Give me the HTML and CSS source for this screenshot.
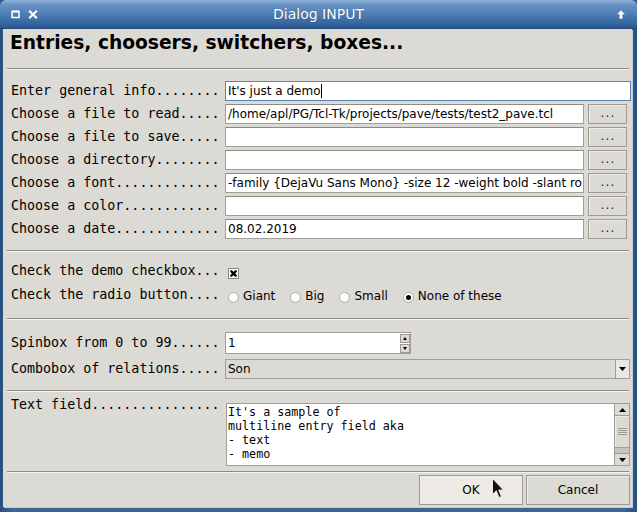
FILE: index.html
```html
<!DOCTYPE html>
<html>
<head>
<meta charset="utf-8">
<title>Dialog INPUT</title>
<link rel="stylesheet" href="styles.css">
</head>
<body>
<div class="window">
  <div class="titlebar">
    <div class="tb-left">
      <svg class="tb-icon" width="9" height="9" viewBox="0 0 9 9"><rect x="1" y="1.5" width="7" height="6" fill="none" stroke="#fff" stroke-width="1.5"/><line x1="1" y1="1.6" x2="8" y2="1.6" stroke="#fff" stroke-width="2"/></svg>
      <svg class="tb-icon" width="10" height="9" viewBox="0 0 10 9"><path d="M1.2 0.8 L8.8 8.2 M8.8 0.8 L1.2 8.2" stroke="#fff" stroke-width="2.1" fill="none"/></svg>
    </div>
    <div class="title">Dialog INPUT</div>
    <div class="tb-right">
      <svg width="8" height="9" viewBox="0 0 8 9"><path d="M4 0.3 L7.8 4.2 L5.4 4.2 L5.4 8.8 L2.6 8.8 L2.6 4.2 L0.2 4.2 Z" fill="#fff"/></svg>
    </div>
  </div>

  <div class="content">
    <h1 class="heading">Entries, choosers, switchers, boxes...</h1>
    <div class="sep"></div>

    <section class="sec sec-entries">
      <div class="row">
        <span class="lbl">Enter general info........</span>
        <div class="entry entry-wide focus">It's just a demo<span class="caret"></span></div>
      </div>
      <div class="row">
        <span class="lbl">Choose a file to read.....</span>
        <div class="entry">/home/apl/PG/Tcl-Tk/projects/pave/tests/test2_pave.tcl</div>
        <div class="dots">...</div>
      </div>
      <div class="row">
        <span class="lbl">Choose a file to save.....</span>
        <div class="entry"></div>
        <div class="dots">...</div>
      </div>
      <div class="row">
        <span class="lbl">Choose a directory........</span>
        <div class="entry"></div>
        <div class="dots">...</div>
      </div>
      <div class="row">
        <span class="lbl">Choose a font.............</span>
        <div class="entry">-family {DejaVu Sans Mono} -size 12 -weight bold -slant ro</div>
        <div class="dots">...</div>
      </div>
      <div class="row">
        <span class="lbl">Choose a color............</span>
        <div class="entry"></div>
        <div class="dots">...</div>
      </div>
      <div class="row">
        <span class="lbl">Choose a date.............</span>
        <div class="entry">08.02.2019</div>
        <div class="dots">...</div>
      </div>
    </section>
    <div class="sep"></div>

    <section class="sec sec-checks">
      <div class="row">
        <span class="lbl">Check the demo checkbox...</span>
        <svg class="check" width="11" height="11" viewBox="0 0 11 11"><rect x="0.5" y="0.5" width="10" height="10" fill="#fff" stroke="#8a877f"/><path d="M2.6 2.6 L8.4 8.4 M8.4 2.6 L2.6 8.4" stroke="#000" stroke-width="2.2"/></svg>
      </div>
      <div class="row">
        <span class="lbl">Check the radio button....</span>
        <div class="radios">
          <div class="radio"><span class="dot"></span>Giant</div>
          <div class="radio"><span class="dot"></span>Big</div>
          <div class="radio"><span class="dot"></span>Small</div>
          <div class="radio"><span class="dot on"></span>None of these</div>
        </div>
      </div>
    </section>
    <div class="sep"></div>

    <section class="sec sec-boxes">
      <div class="row row-spin">
        <span class="lbl">Spinbox from 0 to 99......</span>
        <div class="spin">
          <span class="spin-val">1</span>
          <div class="spin-btns">
            <span class="spin-btn"><svg width="4" height="3" viewBox="0 0 4 3"><path d="M2 0 L4 3 L0 3 Z" fill="#000"/></svg></span>
            <span class="spin-btn"><svg width="4" height="3" viewBox="0 0 4 3"><path d="M0 0 L4 0 L2 3 Z" fill="#000"/></svg></span>
          </div>
        </div>
      </div>
      <div class="row">
        <span class="lbl">Combobox of relations.....</span>
        <div class="combo">
          <span class="combo-val">Son</span>
          <span class="combo-btn"><svg width="7" height="4" viewBox="0 0 7 4"><path d="M0 0 L7 0 L3.5 4 Z" fill="#000"/></svg></span>
        </div>
      </div>
    </section>
    <div class="sep"></div>

    <section class="sec sec-text">
      <span class="lbl lbl-top">Text field................</span>
      <div class="textwrap">
        <div class="textbox">It's a sample of
multiline entry field aka
- text
- memo</div>
        <div class="vscroll">
          <span class="sb-btn"><svg width="7" height="4" viewBox="0 0 7 4"><path d="M3.5 0 L7 4 L0 4 Z" fill="#000"/></svg></span>
          <div class="sb-trough">
            <div class="sb-thumb"><span></span><span></span><span></span><span></span></div>
          </div>
          <span class="sb-btn"><svg width="7" height="4" viewBox="0 0 7 4"><path d="M0 0 L7 0 L3.5 4 Z" fill="#000"/></svg></span>
        </div>
      </div>
    </section>
    <div class="sep"></div>

    <section class="sec sec-buttons">
      <button class="btn hover">OK</button>
      <button class="btn">Cancel</button>
    </section>
  </div>

  <svg class="cursor" width="12" height="21" viewBox="0 0 12 21"><path d="M0.5 0.5 L0.5 16.5 L4.3 12.8 L7 19.5 L9.4 18.5 L6.8 12 L11.5 12 Z" fill="#111" stroke="#e8e8e8" stroke-width="1"/></svg>
</div>
</body>
</html>
```

FILE: styles.css
```css
* {
  box-sizing: border-box;
  margin: 0;
  padding: 0;
}

html, body {
  width: 637px;
  height: 512px;
  overflow: hidden;
}

body {
  background: #2e5a8e;
  font-family: "DejaVu Sans", sans-serif;
  color: #000;
}

.window {
  position: relative;
  width: 637px;
  height: 512px;
  display: flex;
  flex-direction: column;
  background: linear-gradient(to right, #27507f, #3a6699 2%, #3a6699 98%, #27507f);
  border-radius: 6px 6px 0 0;
  overflow: hidden;
}

/* ---------- title bar ---------- */
.titlebar {
  height: 29px;
  flex: none;
  display: grid;
  grid-template-columns: 1fr auto 1fr;
  align-items: center;
  background: linear-gradient(to bottom, #8eb1d6 0%, #6792c2 18%, #4b7bb1 55%, #3465a0 85%, #2b578c 100%);
  border-bottom: 1px solid #23497a;
  color: #fff;
}

.tb-left {
  display: flex;
  align-items: center;
  gap: 8px;
  padding-left: 11px;
}

.tb-icon {
  display: block;
}

.title {
  font-family: "DejaVu Sans", sans-serif;
  font-size: 14px;
  line-height: 16px;
  color: #fff;
  text-shadow: 0 0 1px rgba(20, 50, 90, 0.6);
}

.tb-right {
  justify-self: end;
  padding-right: 12px;
  display: flex;
  align-items: center;
}

/* ---------- content ---------- */
.content {
  margin: 0 5px 5px 3px;
  height: 478px;
  flex: none;
  background: #dcdad5;
  display: flex;
  flex-direction: column;
  box-shadow: 1px 1px 0 #c3ccd8;
}

.heading {
  height: 39px;
  flex: none;
  padding: 3px 0 0 7px;
  font-family: "DejaVu Sans", sans-serif;
  font-weight: bold;
  font-size: 18.67px;
  line-height: 22px;
  white-space: nowrap;
}

.sep {
  height: 2px;
  flex: none;
  margin: 0 3px 0 4px;
  border-top: 1px solid #8e8b85;
  border-bottom: 1px solid #f6f5f3;
}

.sec {
  flex: none;
  display: flex;
  flex-direction: column;
  padding-left: 8px;
}

.row {
  display: flex;
  align-items: center;
  height: 20px;
}

.lbl {
  width: 214px;
  flex: none;
  font-family: "DejaVu Sans Mono", monospace;
  font-size: 13.33px;
  line-height: 18px;
  white-space: pre;
}

/* entries */
.sec-entries {
  padding-top: 11px;
  padding-bottom: 11px;
  gap: 3px;
}

.entry {
  width: 359px;
  flex: none;
  height: 20px;
  background: #fff;
  border: 1px solid #a19e97;
  border-top-color: #8d8a84;
  padding: 0 2px;
  font-size: 12px;
  line-height: 18px;
  white-space: nowrap;
  overflow: hidden;
  display: flex;
  align-items: center;
}

.entry-wide {
  width: auto;
  flex: 1;
  margin-right: 1px;
}

.entry.focus {
  border-color: #5a82b3;
}

.caret {
  display: inline-block;
  width: 1px;
  height: 14px;
  background: #000;
}

.dots {
  width: 39px;
  height: 20px;
  flex: none;
  margin-left: 4px;
  background: #dcdad5;
  border: 1px solid #9e9a91;
  box-shadow: inset 1px 1px 0 #eeece8;
  font-size: 12px;
  line-height: 17px;
  letter-spacing: 1.2px;
  text-indent: 1.2px;
  text-align: center;
  color: #1a1a1a;
}

/* checks */
.sec-checks {
  padding-top: 9px;
  padding-bottom: 13px;
  gap: 4px;
}

.check {
  display: block;
  margin-left: 3px;
  margin-top: 4px;
}

.radios {
  display: flex;
  gap: 15px;
  margin-left: 3px;
  margin-top: 2px;
}

.radio {
  display: flex;
  align-items: center;
  font-size: 12px;
  line-height: 16px;
  white-space: nowrap;
}

.radio .dot {
  width: 11px;
  height: 11px;
  margin-right: 4px;
  margin-top: 3px;
  border-radius: 50%;
  border: 1px solid #b3b0a9;
  background: radial-gradient(circle at 40% 35%, #ffffff 40%, #e9e7e3 100%);
  display: flex;
  align-items: center;
  justify-content: center;
}

.radio .dot.on::after {
  content: "";
  width: 5px;
  height: 5px;
  border-radius: 50%;
  background: #000;
}

/* spin / combo */
.sec-boxes {
  padding-top: 12px;
  padding-bottom: 11px;
  gap: 5px;
}

.row-spin {
  height: 22px;
}

.spin {
  width: 186px;
  height: 22px;
  background: #fff;
  border: 1px solid #a19e97;
  display: flex;
  align-items: center;
  padding-left: 2px;
}

.spin-val {
  flex: 1;
  font-size: 12px;
  line-height: 18px;
}

.spin-btns {
  display: flex;
  flex-direction: column;
  gap: 1px;
}

.spin-btn {
  width: 10px;
  height: 9px;
  background: #dcdad5;
  border: 1px solid #9e9a91;
  display: flex;
  align-items: center;
  justify-content: center;
}

.combo {
  flex: 1;
  margin-right: 2px;
  height: 20px;
  background: #dcdad5;
  border: 1px solid #a19e97;
  display: flex;
  align-items: center;
}

.combo-val {
  flex: 1;
  padding-left: 2px;
  font-size: 12px;
  line-height: 18px;
}

.combo-btn {
  width: 14px;
  height: 18px;
  background: #e9e7e3;
  border-left: 1px solid #a19e97;
  display: flex;
  align-items: center;
  justify-content: center;
}

/* text */
.sec-text {
  flex-direction: row;
  align-items: flex-start;
  padding-top: 11px;
  padding-bottom: 5px;
}

.lbl-top {
  margin-top: -7px;
}

.textwrap {
  flex: 1;
  margin-left: 1px;
  margin-right: 2px;
  height: 63px;
  display: flex;
}

.textbox {
  flex: 1;
  height: 63px;
  background: #fff;
  border: 1px solid #a19e97;
  padding: 1px 1px 0;
  font-family: "DejaVu Sans Mono", monospace;
  font-size: 11.7px;
  line-height: 14px;
  white-space: pre;
  overflow: hidden;
}

.vscroll {
  width: 15px;
  flex: none;
  height: 63px;
  display: flex;
  flex-direction: column;
  border: 1px solid #a19e97;
  border-left: none;
  background: #dcdad5;
}

.sb-btn {
  height: 12px;
  flex: none;
  display: flex;
  align-items: center;
  justify-content: center;
  background: #dcdad5;
  border-bottom: 1px solid #a19e97;
}

.sb-btn:last-child {
  border-bottom: none;
  border-top: 1px solid #a19e97;
}

.sb-trough {
  flex: 1;
  background: #c7c4be;
  display: flex;
  flex-direction: column;
}

.sb-thumb {
  height: 32px;
  background: #dcdad5;
  border-bottom: 1px solid #a19e97;
  box-shadow: inset 1px 1px 0 #eeece8;
  display: flex;
  flex-direction: column;
  justify-content: center;
  align-items: center;
  gap: 1px;
}

.sb-thumb span {
  width: 9px;
  height: 1px;
  background: #9e9a91;
}

/* buttons */
.sec-buttons {
  flex-direction: row;
  justify-content: flex-end;
  gap: 3px;
  padding-top: 2px;
  padding-right: 2px;
}

.btn {
  width: 104px;
  height: 30px;
  background: #dcdad5;
  border: 1px solid #9e9a91;
  box-shadow: inset 1px 1px 0 #eeece8;
  font-family: "DejaVu Sans", sans-serif;
  font-size: 12px;
  color: #000;
}

.btn.hover {
  background: #eeebe7;
}

.cursor {
  position: absolute;
  left: 492px;
  top: 478px;
}
```
